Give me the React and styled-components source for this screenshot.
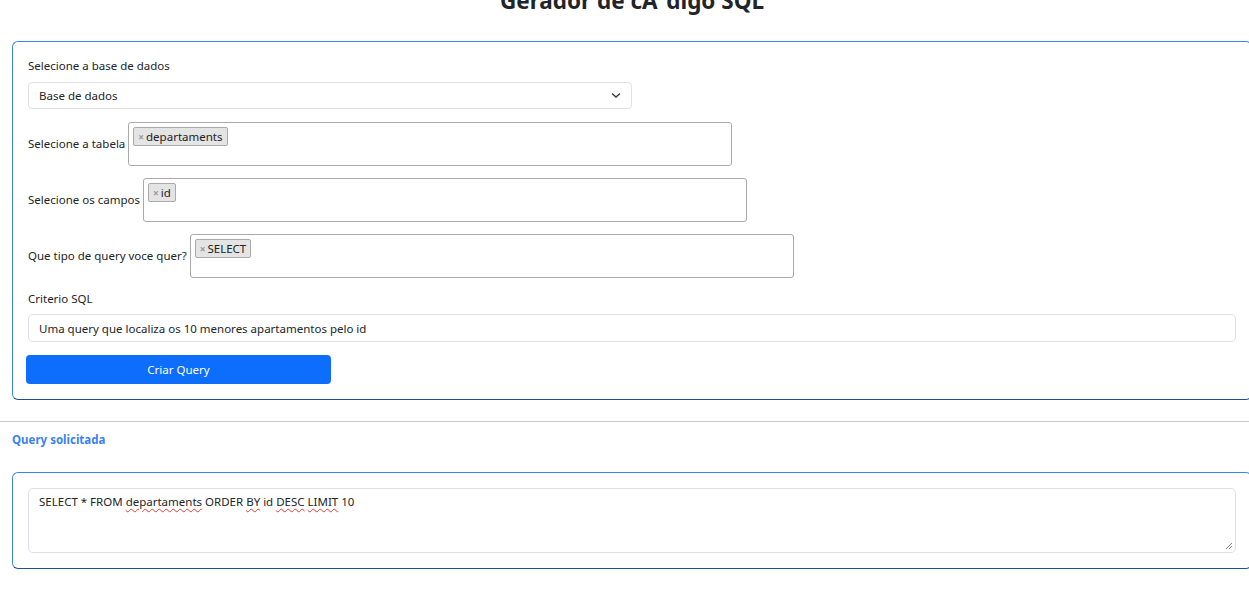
import React from "react";
import styled, { createGlobalStyle } from "styled-components";

const GlobalStyle = createGlobalStyle`
  html, body {
    margin: 0;
    padding: 0;
    overflow: hidden;
    background: #ffffff;
  }
  body {
    font-family: "Noto Sans", "Open Sans", sans-serif;
    font-size: 11.5px;
    color: #212529;
  }
`;

const Page = styled.div`
  width: 1264px;
`;

const Title = styled.h1`
  margin: -12px 0 0;
  height: 53px;
  text-align: center;
  font-size: 22.5px;
  font-weight: 700;
  line-height: 26px;
  color: #212529;
`;

const Card = styled.section`
  box-sizing: border-box;
  width: 1240px;
  margin-left: 12px;
  padding: 15px;
  border: 1px solid;
  border-color: #3a86f0 #2f74d6 #1d4f94 #3a86f0;
  border-radius: 6px;
`;

const Label = styled.label`
  display: block;
  line-height: 17px;
  margin: ${(p) => p.$top || 0}px 0 ${(p) => p.$bottom || 8}px 0;
`;

const Select = styled.div`
  box-sizing: border-box;
  width: 604px;
  height: 27px;
  display: flex;
  align-items: center;
  justify-content: space-between;
  padding: 0 10px;
  border: 1px solid #dee2e6;
  border-radius: 4px;
`;

const Row = styled.div`
  display: flex;
  align-items: center;
  gap: 3px;
  margin-top: ${(p) => p.$top || 12}px;
`;

const RowLabel = styled.span`
  line-height: 16px;
`;

const Multi = styled.div`
  box-sizing: border-box;
  width: 604px;
  height: 44px;
  padding: 4px;
  border: 1px solid #aaaaaa;
  border-radius: 3px;
  display: flex;
  align-items: flex-start;
`;

const Tag = styled.span`
  display: inline-flex;
  align-items: center;
  height: 19px;
  box-sizing: border-box;
  padding: 0 4px 0 4px;
  background: #e4e4e4;
  border: 1px solid #aaaaaa;
  border-radius: 2px;
  color: #222;
`;

const TagX = styled.span`
  color: #999;
  font-size: 10px;
  font-weight: 700;
  margin-right: 2px;
`;

const Field = styled.div`
  box-sizing: border-box;
  width: 100%;
  height: ${(p) => p.$h || 28}px;
  padding: ${(p) => (p.$area ? "5px 10px" : "0 10px")};
  display: flex;
  align-items: ${(p) => (p.$area ? "flex-start" : "center")};
  border: 1px solid #dee2e6;
  border-radius: 5px;
  position: relative;
`;

const Button = styled.button`
  display: block;
  box-sizing: border-box;
  width: 305px;
  height: 29px;
  margin: 13px 0 0 -2px;
  background: #0d6efd;
  border: none;
  border-radius: 4px;
  color: #ffffff;
  font-family: inherit;
  font-size: 11.5px;
`;

const Divider = styled.hr`
  margin: 21px 0 0;
  border: none;
  border-top: 1px solid #cccccc;
`;

const Heading = styled.h2`
  margin: 10px 0 24px 12px;
  font-size: 11.5px;
  line-height: 16px;
  font-weight: 700;
  color: #3b82f0;
`;

const Misspelled = styled.span`
  text-decoration: underline wavy #e53935;
  text-decoration-thickness: 1px;
  text-underline-offset: 2px;
`;

const Grip = styled.svg`
  position: absolute;
  right: 2px;
  bottom: 2px;
`;

function Chevron() {
  return (
    <svg width="10" height="7" viewBox="0 0 10 7">
      <path d="M1 1.5 L5 5 L9 1.5" fill="none" stroke="#343a40" strokeWidth="1.4" />
    </svg>
  );
}

function TagSelect({ label, value }) {
  return (
    <>
      <RowLabel>{label}</RowLabel>
      <Multi>
        <Tag>
          <TagX>×</TagX>
          {value}
        </Tag>
      </Multi>
    </>
  );
}

export default function App() {
  return (
    <Page>
      <GlobalStyle />
      <Title>Gerador de cÃ³digo SQL</Title>
      <Card>
        <Label>Selecione a base de dados</Label>
        <Select>
          <span>Base de dados</span>
          <Chevron />
        </Select>
        <Row $top={13}>
          <TagSelect label="Selecione a tabela" value="departaments" />
        </Row>
        <Row>
          <TagSelect label="Selecione os campos" value="id" />
        </Row>
        <Row>
          <TagSelect label="Que tipo de query voce quer?" value="SELECT" />
        </Row>
        <Label $top={12} $bottom={7}>
          Criterio SQL
        </Label>
        <Field>Uma query que localiza os 10 menores apartamentos pelo id</Field>
        <Button type="button">Criar Query</Button>
      </Card>
      <Divider />
      <Heading>Query solicitada</Heading>
      <Card>
        <Field $area $h={65}>
          <span>
            SELECT * FROM <Misspelled>departaments</Misspelled> ORDER <Misspelled>BY</Misspelled> id{" "}
            <Misspelled>DESC</Misspelled> <Misspelled>LIMIT</Misspelled> 10
          </span>
          <Grip width="8" height="8" viewBox="0 0 8 8">
            <path d="M7 1 L1 7 M7 4 L4 7" stroke="#666" strokeWidth="0.8" />
          </Grip>
        </Field>
      </Card>
    </Page>
  );
}
